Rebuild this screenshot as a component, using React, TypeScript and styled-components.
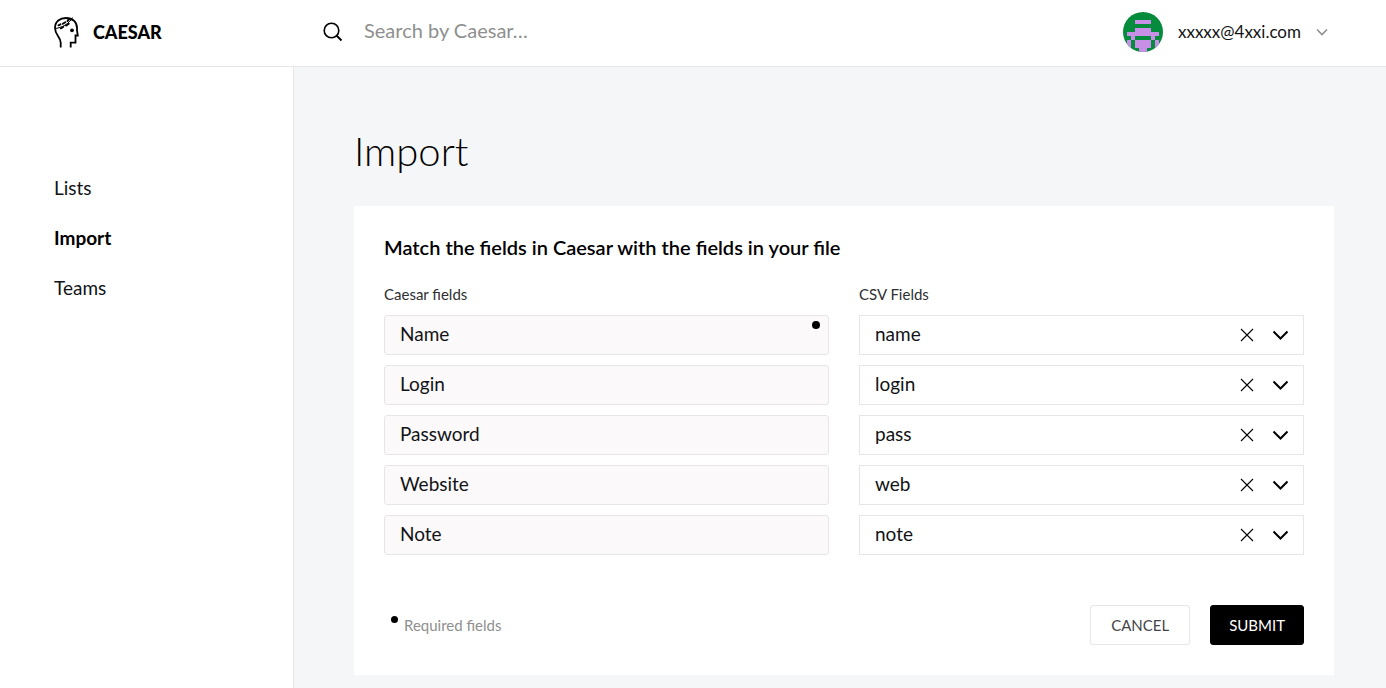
import React, { useState } from "react";
import styled, { createGlobalStyle } from "styled-components";

const GlobalStyle = createGlobalStyle`
  *, *::before, *::after { box-sizing: border-box; }
  body { margin: 0; background: #f5f6f8; color: #000; }
  body, button, input, select { font-family: Lato, "Liberation Sans", sans-serif; }
  h1, h2, p, ul { margin: 0; padding: 0; }
`;

const Page = styled.div`
  min-height: 100vh;
  display: flex;
  flex-direction: column;
`;

const Header = styled.header`
  display: flex;
  align-items: center;
  height: 67px;
  padding: 0 58px 3px 52px;
  background: #fff;
  border-bottom: 1px solid #e6e6e8;
`;

const Brand = styled.a`
  display: flex;
  align-items: center;
  gap: 12px;
  flex: 0 0 271px;
  color: #000;
  font-size: 18px;
  font-weight: 900;
  text-decoration: none;
`;

const Search = styled.label`
  display: flex;
  align-items: center;
  gap: 20px;
  flex: 1;
`;

const SearchInput = styled.input`
  flex: 1;
  min-width: 0;
  height: 40px;
  padding: 0 0 4px;
  border: 0;
  outline: 0;
  background: transparent;
  font-size: 20px;
  &::placeholder { color: #8f8f8f; opacity: 1; }
`;

const Account = styled.button`
  display: flex;
  align-items: center;
  gap: 15px;
  padding: 0;
  border: 0;
  background: transparent;
  color: #121316;
  font-size: 17px;
`;

const Body = styled.div`
  flex: 1;
  display: flex;
`;

const Sidebar = styled.nav`
  flex: 0 0 294px;
  padding: 109px 54px 0;
  background: #fff;
  border-right: 1px solid #e6e6e8;
`;

const Menu = styled.ul`
  display: flex;
  flex-direction: column;
  gap: 26px;
  list-style: none;
`;

const MenuLink = styled.a<{ $active?: boolean }>`
  display: block;
  color: ${(p) => (p.$active ? "#000" : "#121316")};
  font-size: 19px;
  line-height: 24px;
  font-weight: ${(p) => (p.$active ? 700 : 400)};
  text-decoration: none;
`;

const Main = styled.main`
  flex: 1;
  min-width: 0;
  padding: 60px 52px 13px 60px;
`;

const Title = styled.h1`
  font-size: 40px;
  line-height: 48px;
  font-weight: 300;
  margin-bottom: 31px;
`;

const Card = styled.form`
  padding: 29px 30px 30px;
  background: #fff;
`;

const CardTitle = styled.h2`
  font-size: 20px;
  line-height: 24px;
  font-weight: 600;
  margin-bottom: 25px;
`;

const Fields = styled.div`
  display: grid;
  grid-template-columns: 1fr 1fr;
  gap: 10px 30px;
`;

const ColumnName = styled.div`
  color: #2e2f31;
  font-size: 15px;
  line-height: 21px;
`;

const Cell = styled.div`
  position: relative;
  height: 40px;
`;

const FieldName = styled.input`
  width: 100%;
  height: 40px;
  padding: 0 15px 4px;
  border: 1px solid #e6e6e8;
  border-radius: 3px;
  outline: 0;
  background: #fbf9fa;
  color: #121316;
  font-size: 19px;
`;

const RequiredDot = styled.span`
  position: absolute;
  top: 6px;
  right: 9px;
  width: 8px;
  height: 8px;
  border-radius: 50%;
  background: #000;
`;

const FieldSelect = styled.select`
  appearance: none;
  width: 100%;
  height: 40px;
  padding: 0 80px 4px 15px;
  border: 1px solid #e6e6e8;
  border-radius: 0;
  outline: 0;
  background: #fff;
  color: #121316;
  font-size: 19px;
`;

const SelectIcons = styled.div`
  position: absolute;
  inset: 0 15px 0 auto;
  display: flex;
  align-items: center;
  gap: 18px;
  pointer-events: none;
`;

const ClearButton = styled.button`
  display: flex;
  padding: 0;
  border: 0;
  background: transparent;
  pointer-events: auto;
`;

const Footer = styled.footer`
  display: flex;
  align-items: center;
  gap: 20px;
  margin-top: 50px;
`;

const RequiredNote = styled.p`
  display: flex;
  gap: 6px;
  margin-right: auto;
  padding-left: 7px;
  color: #8f8f8f;
  font-size: 15px;
  line-height: 20px;
  &::before {
    content: "";
    width: 7px;
    height: 7px;
    margin-top: 1px;
    border-radius: 50%;
    background: #000;
  }
`;

const Button = styled.button<{ $primary?: boolean }>`
  height: 40px;
  padding: 0 ${(p) => (p.$primary ? 18 : 20)}px;
  border: 1px solid ${(p) => (p.$primary ? "#000" : "#e6e6e8")};
  border-radius: 3px;
  background: ${(p) => (p.$primary ? "#000" : "#fff")};
  color: ${(p) => (p.$primary ? "#fff" : "#444548")};
  font-size: 15px;
`;

const Logo = () => (
  <svg width="29" height="34" viewBox="0 0 29 34" fill="none" stroke="#000" strokeWidth="1.800" aria-hidden="true">
    <path d="M8.700 32.500V27.500C8.700 22 3 20 3 13C3 6.500 8 3 14 3C21 3 25 7.500 25 13V15.500L25.800 20.500H23.500V27.700H18.700V32.500" />
    <circle cx="20" cy="15.300" r="1.900" fill="#000" stroke="none" />
    <path d="M3.500 13.500C10 12.500 17 9 20.500 2.500" strokeWidth="1" />
    <path d="M6.500 10.300L8.500 9.300M10.800 8.800L13.300 7.300M15.500 6L17.300 4M8.800 13.300L11.300 12M14 10.600L16.800 8.800" strokeWidth="1.900" strokeLinecap="round" />
  </svg>
);

const avatarCells = [
  [3, 2, 4, 1],
  [3, 4, 4, 1],
  [1, 5, 8, 1],
  [2, 6, 1, 1],
  [7, 6, 1, 1],
  [1, 7, 1, 1],
  [3, 7, 4, 2],
  [8, 7, 1, 1],
  [1, 8, 1, 1],
  [8, 8, 1, 1],
  [4, 9, 2, 1],
];

const Avatar = () => (
  <svg width="40" height="40" viewBox="0 0 10 10" shapeRendering="crispEdges" aria-hidden="true">
    <clipPath id="avatar-circle"><circle cx="5" cy="5" r="5" /></clipPath>
    <g clipPath="url(#avatar-circle)">
      <rect width="10" height="10" fill="#058b3c" />
      {avatarCells.map(([x, y, w, h]) => (
        <rect key={`${x}-${y}`} x={x} y={y} width={w} height={h} fill="#c78fe6" />
      ))}
    </g>
  </svg>
);

const csvFields = ["name", "login", "pass", "web", "note"];
const caesarFields = ["Name", "Login", "Password", "Website", "Note"];

export default function App() {
  const [matches, setMatches] = useState(csvFields);
  const setMatch = (index: number, value: string) =>
    setMatches((old) => old.map((item, i) => (i === index ? value : item)));

  return (
    <Page>
      <GlobalStyle />
      <Header>
        <Brand href="#">
          <Logo />
          CAESAR
        </Brand>
        <Search>
          <svg width="21" height="21" viewBox="0 0 21 21" fill="none" stroke="#000" strokeWidth="1.600" aria-hidden="true">
            <circle cx="8.500" cy="9.500" r="7.300" />
            <path d="M13.500 14.500L18.500 19.500" strokeWidth="2" />
          </svg>
          <SearchInput type="search" aria-label="Search" placeholder="Search by Caesar…" />
        </Search>
        <Account type="button">
          <Avatar />
          xxxxx@4xxi.com
          <svg width="12" height="8" viewBox="0 0 12 8" fill="none" stroke="#8f8f8f" strokeWidth="1.600" aria-hidden="true">
            <path d="M1 1.500L6 6.500L11 1.500" />
          </svg>
        </Account>
      </Header>
      <Body>
        <Sidebar>
          <Menu>
            <li><MenuLink href="#lists">Lists</MenuLink></li>
            <li><MenuLink href="#import" $active aria-current="page">Import</MenuLink></li>
            <li><MenuLink href="#teams">Teams</MenuLink></li>
          </Menu>
        </Sidebar>
        <Main>
          <Title>Import</Title>
          <Card onSubmit={(e) => e.preventDefault()}>
            <CardTitle>Match the fields in Caesar with the fields in your file</CardTitle>
            <Fields>
              <ColumnName>Caesar fields</ColumnName>
              <ColumnName>CSV Fields</ColumnName>
              {caesarFields.map((field, index) => (
                <React.Fragment key={field}>
                  <Cell>
                    <FieldName readOnly value={field} aria-label={`Caesar field ${field}`} />
                    {index === 0 && <RequiredDot />}
                  </Cell>
                  <Cell>
                    <FieldSelect
                      aria-label={`CSV field for ${field}`}
                      value={matches[index]}
                      onChange={(e) => setMatch(index, e.target.value)}
                    >
                      <option value="" />
                      {csvFields.map((name) => (
                        <option key={name} value={name}>{name}</option>
                      ))}
                    </FieldSelect>
                    <SelectIcons>
                      <ClearButton type="button" aria-label={`Clear ${field}`} onClick={() => setMatch(index, "")}>
                        <svg width="14" height="14" viewBox="0 0 14 14" stroke="#000" strokeWidth="1.100" aria-hidden="true">
                          <path d="M1 1L13 13M13 1L1 13" />
                        </svg>
                      </ClearButton>
                      <svg width="17" height="10" viewBox="0 0 17 10" fill="none" stroke="#000" strokeWidth="2" aria-hidden="true">
                        <path d="M1.500 1.500L8.500 8.500L15.500 1.500" />
                      </svg>
                    </SelectIcons>
                  </Cell>
                </React.Fragment>
              ))}
            </Fields>
            <Footer>
              <RequiredNote>Required fields</RequiredNote>
              <Button type="button">CANCEL</Button>
              <Button type="submit" $primary>SUBMIT</Button>
            </Footer>
          </Card>
        </Main>
      </Body>
    </Page>
  );
}
